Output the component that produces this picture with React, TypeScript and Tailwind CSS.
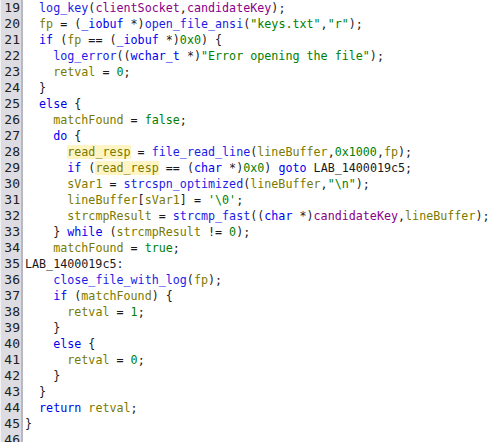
import React from "react";

type Tok = [string, string?];

const K = "text-[#0000f0]"; // keywords, types
const F = "text-[#1c1ce6]"; // function names
const V = "text-[#7a7a00]"; // locals
const P = "text-[#880088]"; // params
const C = "text-[#008000]"; // constants, strings
const H = "bg-[#fff5c4]"; // highlighted token

const lines: { n: number; indent: number; toks: Tok[] }[] = [
  { n: 19, indent: 1, toks: [["log_key", F], ["("], ["clientSocket", P], [","], ["candidateKey", P], [");"]] },
  { n: 20, indent: 1, toks: [["fp", V], [" = ("], ["_iobuf", K], [" *)"], ["open_file_ansi", F], ["("], ['"keys.txt"', C], [","], ['"r"', C], [");"]] },
  { n: 21, indent: 1, toks: [["if", K], [" ("], ["fp", V], [" == ("], ["_iobuf", K], [" *)"], ["0x0", C], [") {"]] },
  { n: 22, indent: 2, toks: [["log_error", F], ["(("], ["wchar_t", K], [" *)"], ['"Error opening the file"', C], [");"]] },
  { n: 23, indent: 2, toks: [["retval", V], [" = "], ["0", C], [";"]] },
  { n: 24, indent: 1, toks: [["}"]] },
  { n: 25, indent: 1, toks: [["else", K], [" {"]] },
  { n: 26, indent: 2, toks: [["matchFound", V], [" = "], ["false", C], [";"]] },
  { n: 27, indent: 2, toks: [["do", K], [" {"]] },
  { n: 28, indent: 3, toks: [["read_resp", V + " " + H], [" = "], ["file_read_line", F], ["("], ["lineBuffer", V], [","], ["0x1000", C], [","], ["fp", V], [");"]] },
  { n: 29, indent: 3, toks: [["if", K], [" ("], ["read_resp", V + " " + H], [" == ("], ["char", K], [" *)"], ["0x0", C], [") "], ["goto", K], [" LAB_1400019c5;"]] },
  { n: 30, indent: 3, toks: [["sVar1", V], [" = "], ["strcspn_optimized", F], ["("], ["lineBuffer", V], [","], ['"\\n"', C], [");"]] },
  { n: 31, indent: 3, toks: [["lineBuffer", V], ["["], ["sVar1", V], ["] = "], ["'\\0'", C], [";"]] },
  { n: 32, indent: 3, toks: [["strcmpResult", V], [" = "], ["strcmp_fast", F], ["(("], ["char", K], [" *)"], ["candidateKey", P], [","], ["lineBuffer", V], [");"]] },
  { n: 33, indent: 2, toks: [["} "], ["while", K], [" ("], ["strcmpResult", V], [" != "], ["0", C], [");"]] },
  { n: 34, indent: 2, toks: [["matchFound", V], [" = "], ["true", C], [";"]] },
  { n: 35, indent: 0, toks: [["LAB_1400019c5:"]] },
  { n: 36, indent: 2, toks: [["close_file_with_log", F], ["("], ["fp", V], [");"]] },
  { n: 37, indent: 2, toks: [["if", K], [" ("], ["matchFound", V], [") {"]] },
  { n: 38, indent: 3, toks: [["retval", V], [" = "], ["1", C], [";"]] },
  { n: 39, indent: 2, toks: [["}"]] },
  { n: 40, indent: 2, toks: [["else", K], [" {"]] },
  { n: 41, indent: 3, toks: [["retval", V], [" = "], ["0", C], [";"]] },
  { n: 42, indent: 2, toks: [["}"]] },
  { n: 43, indent: 1, toks: [["}"]] },
  { n: 44, indent: 1, toks: [["return", K], [" "], ["retval", V], [";"]] },
  { n: 45, indent: 0, toks: [["}"]] },
  { n: 46, indent: 0, toks: [] },
];

export default function App() {
  return (
    <div className="w-[498px] h-[442px] overflow-hidden bg-white flex">
      <div className="w-[23px] shrink-0 bg-[#dcdce2] border-l border-[#f2f2f4] border-r-[2px] border-r-[#b8b8c0] font-['DejaVu_Sans_Mono',monospace] text-[13px] text-[#202020]">
        {lines.map((l) => (
          <div key={l.n} className="h-4 leading-4 text-right pr-[1px]">
            {l.n}
          </div>
        ))}
      </div>
      <div className="pl-[2px] font-['DejaVu_Sans_Mono',monospace] text-[11.7px] text-[#1a1a1a] whitespace-pre">
        {lines.map((l) => (
          <div key={l.n} className="h-4 leading-4">
            {"  ".repeat(l.indent)}
            {l.toks.map((t, i) => (
              <span key={i} className={t[1] ?? ""}>
                {t[0]}
              </span>
            ))}
          </div>
        ))}
      </div>
    </div>
  );
}
